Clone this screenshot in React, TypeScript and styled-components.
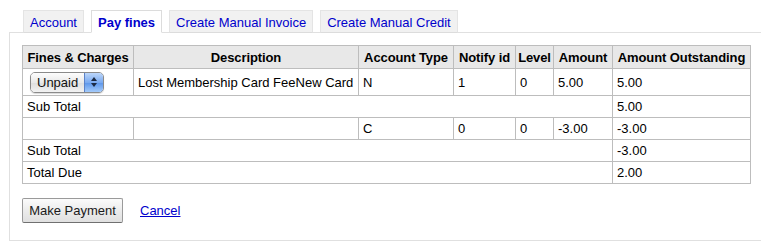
import React from 'react';
import styled, { createGlobalStyle } from 'styled-components';

const GlobalStyle = createGlobalStyle`
  html, body {
    margin: 0;
    padding: 0;
    background: #fff;
    overflow: hidden;
  }
  body {
    font-family: "Liberation Sans", Arial, sans-serif;
    font-size: 13px;
    color: #000;
  }
`;

const Page = styled.div`
  width: 761px;
  height: 243px;
  overflow: hidden;
  padding: 10px 0 0 9px;
  box-sizing: border-box;
`;

const TabList = styled.ul`
  display: flex;
  gap: 7px;
  list-style: none;
  margin: 0 0 0 14px;
  padding: 0;
  position: relative;
  z-index: 1;
`;

const Tab = styled.li<{ $active?: boolean }>`
  height: 23px;
  box-sizing: border-box;
  padding: 4px 6px 0;
  line-height: 16px;
  background: ${p => (p.$active ? '#fff' : '#f1f1f1')};
  border: 1px solid ${p => (p.$active ? '#dcdcdc' : '#e4e4e4')};
  border-bottom: ${p => (p.$active ? '1px solid #fff' : '1px solid #dcdcdc')};
  margin-bottom: -1px;
  a {
    color: #0000cc;
    text-decoration: none;
    font-weight: ${p => (p.$active ? 'bold' : 'normal')};
  }
`;

const Panel = styled.div`
  width: 780px;
  height: 209px;
  box-sizing: border-box;
  border: 1px solid #e0e0e0;
  padding: 12px 0 0 12px;
`;

const FinesTable = styled.table`
  border-collapse: collapse;
  table-layout: fixed;
  width: 729px;
  font-size: 13px;
`;

const HeadCell = styled.th<{ $w: number }>`
  width: ${p => p.$w}px;
  background: #e8e8e8;
  border: 1px solid #bdbdbd;
  padding: 0 1px;
  height: 22px;
  font-weight: bold;
  text-align: center;
  white-space: nowrap;
  letter-spacing: -0.1px;
`;

const Cell = styled.td<{ $tall?: boolean }>`
  border: 1px solid #bdbdbd;
  padding: 0 4px;
  height: ${p => (p.$tall ? 26 : 21)}px;
  text-align: left;
  white-space: nowrap;
  vertical-align: middle;
`;

const FakeSelect = styled.div`
  display: flex;
  width: 74px;
  height: 21px;
  margin-left: 3px;
  box-sizing: border-box;
  border: 1px solid #8a8a8a;
  border-radius: 5px;
  overflow: hidden;
  box-shadow: 0 1px 1px rgba(0, 0, 0, 0.15);
`;

const SelectLabel = styled.span`
  flex: 1;
  padding-left: 6px;
  line-height: 19px;
  background: linear-gradient(#fdfdfd, #e9e9e9 50%, #dedede 51%, #f2f2f2);
  color: #111;
`;

const SelectArrows = styled.span`
  width: 18px;
  display: flex;
  align-items: center;
  justify-content: center;
  border-left: 1px solid #5b82c8;
  background: linear-gradient(#bcd6fa, #7aaaf0 50%, #5b95ea 51%, #a3cafa);
`;

const Actions = styled.div`
  display: flex;
  align-items: center;
  gap: 17px;
  margin-top: 14px;
`;

const PayButton = styled.button`
  font-family: "Liberation Sans", Arial, sans-serif;
  font-size: 13px;
  color: #1a1a1a;
  width: 101px;
  height: 25px;
  padding: 0;
  border: 1px solid #9a9a9a;
  border-bottom-color: #707070;
  border-radius: 2px;
  background: linear-gradient(#fbfbfb, #ececec 50%, #e0e0e0);
`;

const CancelLink = styled.a`
  color: #0000cc;
  text-decoration: underline;
`;

const cols = [
  { label: 'Fines & Charges', w: 108 },
  { label: 'Description', w: 222 },
  { label: 'Account Type', w: 92 },
  { label: 'Notify id', w: 59 },
  { label: 'Level', w: 35 },
  { label: 'Amount', w: 56 },
  { label: 'Amount Outstanding', w: 135 },
];

const Arrows = () => (
  <svg width="8" height="12" viewBox="0 0 8 12">
    <path d="M4 1 L7 5 L1 5 Z" fill="#1c2a44" />
    <path d="M4 11 L7 7 L1 7 Z" fill="#1c2a44" />
  </svg>
);

export default function App() {
  return (
    <Page>
      <GlobalStyle />
      <TabList>
        <Tab><a href="#">Account</a></Tab>
        <Tab $active><a href="#">Pay fines</a></Tab>
        <Tab><a href="#">Create Manual Invoice</a></Tab>
        <Tab><a href="#">Create Manual Credit</a></Tab>
      </TabList>
      <Panel>
        <FinesTable>
          <thead>
            <tr>
              {cols.map(c => (
                <HeadCell key={c.label} $w={c.w}>{c.label}</HeadCell>
              ))}
            </tr>
          </thead>
          <tbody>
            <tr>
              <Cell $tall>
                <FakeSelect>
                  <SelectLabel>Unpaid</SelectLabel>
                  <SelectArrows><Arrows /></SelectArrows>
                </FakeSelect>
              </Cell>
              <Cell $tall>Lost Membership Card FeeNew Card</Cell>
              <Cell $tall>N</Cell>
              <Cell $tall>1</Cell>
              <Cell $tall>0</Cell>
              <Cell $tall>5.00</Cell>
              <Cell $tall>5.00</Cell>
            </tr>
            <tr>
              <Cell colSpan={6}>Sub Total</Cell>
              <Cell>5.00</Cell>
            </tr>
            <tr>
              <Cell></Cell>
              <Cell></Cell>
              <Cell>C</Cell>
              <Cell>0</Cell>
              <Cell>0</Cell>
              <Cell>-3.00</Cell>
              <Cell>-3.00</Cell>
            </tr>
            <tr>
              <Cell colSpan={6}>Sub Total</Cell>
              <Cell>-3.00</Cell>
            </tr>
            <tr>
              <Cell colSpan={6}>Total Due</Cell>
              <Cell>2.00</Cell>
            </tr>
          </tbody>
        </FinesTable>
        <Actions>
          <PayButton type="button">Make Payment</PayButton>
          <CancelLink href="#">Cancel</CancelLink>
        </Actions>
      </Panel>
    </Page>
  );
}
